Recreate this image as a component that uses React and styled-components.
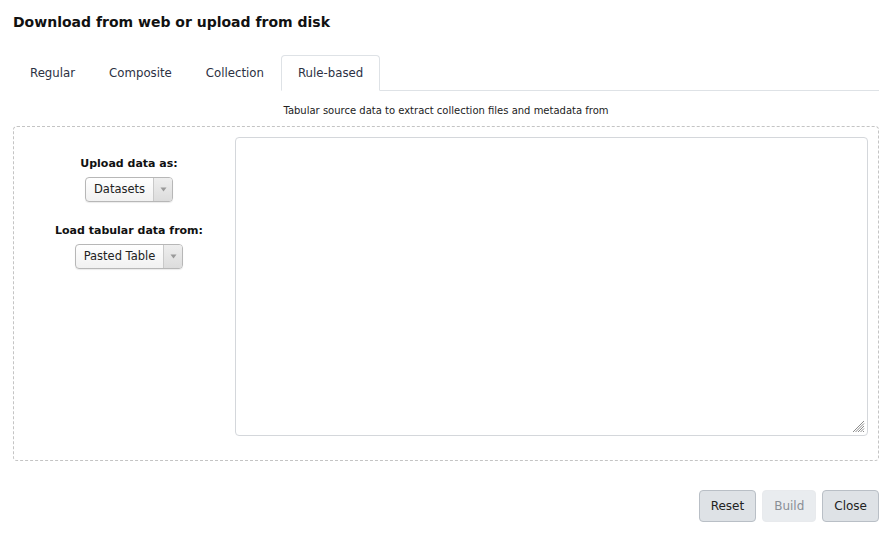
import React from "react";
import styled, { createGlobalStyle } from "styled-components";

const Global = createGlobalStyle`
  html, body { margin: 0; padding: 0; background: #fff; }
  body { font-family: "DejaVu Sans", "Liberation Sans", sans-serif; color: #2c3143; }
  * { box-sizing: border-box; }
`;

const Page = styled.div`
  width: 891px;
  height: 538px;
  padding: 13px 12px 0 13px;
  display: flex;
  flex-direction: column;
`;

const Title = styled.h1`
  margin: 0;
  font-size: 14px;
  font-weight: bold;
  line-height: 18px;
  color: #111;
`;

const Tabs = styled.div`
  margin-top: 24px;
  display: flex;
  border-bottom: 1px solid #dee2e6;
  height: 36px;
`;

const Tab = styled.div`
  padding: 0 16px;
  height: 36px;
  line-height: 34px;
  font-size: 11.75px;
  color: #2c3143;
  border: 1px solid ${(p) => (p.$active ? "#dee2e6" : "transparent")};
  border-bottom-color: ${(p) => (p.$active ? "#fff" : "transparent")};
  border-radius: 4px 4px 0 0;
  background: #fff;
  margin-bottom: -1px;
`;

const Hint = styled.div`
  text-align: center;
  font-size: 10px;
  line-height: 14px;
  margin-top: 13px;
  color: #222;
`;

const DropZone = styled.div`
  margin-top: 8px;
  height: 335px;
  border: 1px dashed #c4c4c4;
  border-radius: 4px;
  display: grid;
  grid-template-columns: 221px 1fr;
  padding: 10px 10px 24px 0;
`;

const Controls = styled.div`
  display: flex;
  flex-direction: column;
  align-items: center;
  padding: 19px 0 0 9px;
`;

const Label = styled.div`
  font-size: 11px;
  font-weight: bold;
  line-height: 16px;
  color: #111;
  margin-top: ${(p) => p.$top || 0}px;
`;

const Select = styled.div`
  margin-top: 5px;
  height: 25px;
  display: flex;
  border: 1px solid #b7b7b7;
  border-radius: 4px;
  background: linear-gradient(#ffffff, #f1f1f1);
  box-shadow: 0 1px 1px rgba(0, 0, 0, 0.08);
  overflow: hidden;
`;

const SelectText = styled.span`
  font-size: 11.5px;
  line-height: 23px;
  padding: 0 8px 0 8px;
  color: #222;
`;

const Arrow = styled.span`
  width: 19px;
  border-left: 1px solid #c9c9c9;
  background: linear-gradient(#eeeeee, #dcdcdc);
  display: flex;
  align-items: center;
  justify-content: center;
`;

const AreaWrap = styled.div`
  position: relative;
  border: 1px solid #d4d7db;
  border-radius: 4px;
  background: #fff;
`;

const Area = styled.textarea`
  width: 100%;
  height: 100%;
  border: none;
  outline: none;
  resize: none;
  background: transparent;
  display: block;
`;

const Grip = styled.svg`
  position: absolute;
  right: 2px;
  bottom: 2px;
`;

const Footer = styled.div`
  margin-top: 29px;
  display: flex;
  justify-content: flex-end;
  gap: 6px;
`;

const Button = styled.button`
  height: 32px;
  padding: 0 11px;
  font-family: inherit;
  font-size: 12px;
  border-radius: 4px;
  border: 1px solid ${(p) => (p.disabled ? "#e8eaed" : "#b9bfc6")};
  background: ${(p) => (p.disabled ? "#e9ecef" : "#dee2e6")};
  color: ${(p) => (p.disabled ? "#8a8f96" : "#222")};
`;

const Caret = () => (
  <svg width="7" height="5" viewBox="0 0 7 5">
    <path d="M0.5 0.5 L6.5 0.5 L3.5 4.5 Z" fill="#9a9a9a" />
  </svg>
);

export default function App() {
  return (
    <>
      <Global />
      <Page>
        <Title>Download from web or upload from disk</Title>
        <Tabs>
          <Tab>Regular</Tab>
          <Tab>Composite</Tab>
          <Tab>Collection</Tab>
          <Tab $active>Rule-based</Tab>
        </Tabs>
        <Hint>Tabular source data to extract collection files and metadata from</Hint>
        <DropZone>
          <Controls>
            <Label>Upload data as:</Label>
            <Select>
              <SelectText>Datasets</SelectText>
              <Arrow><Caret /></Arrow>
            </Select>
            <Label $top={21}>Load tabular data from:</Label>
            <Select>
              <SelectText>Pasted Table</SelectText>
              <Arrow><Caret /></Arrow>
            </Select>
          </Controls>
          <AreaWrap>
            <Area />
            <Grip width="13" height="13" viewBox="0 0 13 13">
              <g stroke="#8c8c8c" strokeWidth="1">
                <line x1="12" y1="1" x2="1" y2="12" />
                <line x1="12" y1="3.5" x2="3.5" y2="12" />
                <line x1="12" y1="6" x2="6" y2="12" />
                <line x1="12" y1="8.5" x2="8.5" y2="12" />
                <line x1="12" y1="11" x2="11" y2="12" />
              </g>
            </Grip>
          </AreaWrap>
        </DropZone>
        <Footer>
          <Button>Reset</Button>
          <Button disabled>Build</Button>
          <Button>Close</Button>
        </Footer>
      </Page>
    </>
  );
}
